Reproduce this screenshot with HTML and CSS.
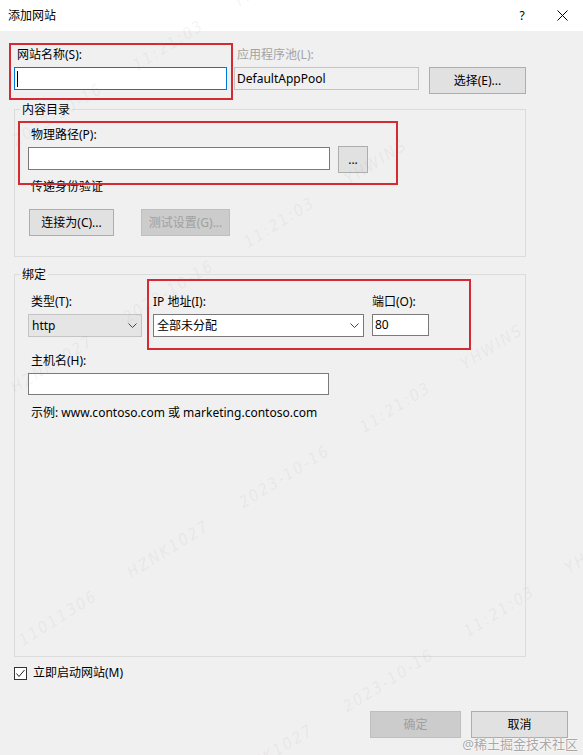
FILE: index.html
```html
<!DOCTYPE html>
<html lang="zh-CN">
<head>
    <meta charset="UTF-8">
    <meta name="viewport" content="width=device-width, initial-scale=1.0">
    <title>添加网站</title>
    <link rel="stylesheet" href="styles.css">
</head>
<body>

    <div class="window">
        <div class="titlebar">
            <span class="title">添加网站</span>
            <span class="help">?</span>
            <span class="close">
                <svg width="11" height="11" viewBox="0 0 11 11"><path d="M0.5 0.5 L10.5 10.5 M10.5 0.5 L0.5 10.5" stroke="#000" stroke-width="1" fill="none"/></svg>
            </span>
        </div>

        <div class="dialog">
            <div class="top-row">
                <div class="field name-field">
                    <div class="label">网站名称(S):</div>
                    <div class="textbox focused"><span class="caret"></span></div>
                </div>
                <div class="field pool-field">
                    <div class="label disabled">应用程序池(L):</div>
                    <div class="textbox readonly">DefaultAppPool</div>
                </div>
                <button class="btn select-btn">选择(E)...</button>
            </div>

            <div class="group dir-group">
                <div class="group-title">内容目录</div>
                <div class="label path-label">物理路径(P):</div>
                <div class="path-row">
                    <div class="textbox path-box"></div>
                    <button class="btn browse-btn">...</button>
                </div>
                <div class="label pass-label">传递身份验证</div>
                <div class="btn-row">
                    <button class="btn connect-btn">连接为(C)...</button>
                    <button class="btn disabled test-btn">测试设置(G)...</button>
                </div>
            </div>

            <div class="group bind-group">
                <div class="group-title">绑定</div>
                <div class="bind-row">
                    <div class="field type-field">
                        <div class="label">类型(T):</div>
                        <div class="combo dropdown">
                            <span>http</span>
                            <svg class="chevron" width="9" height="5" viewBox="0 0 9 5"><path d="M0.5 0.5 L4.5 4.5 L8.5 0.5" stroke="#444" fill="none"/></svg>
                        </div>
                    </div>
                    <div class="field ip-field">
                        <div class="label">IP 地址(I):</div>
                        <div class="combo editable">
                            <span>全部未分配</span>
                            <svg class="chevron" width="9" height="5" viewBox="0 0 9 5"><path d="M0.5 0.5 L4.5 4.5 L8.5 0.5" stroke="#444" fill="none"/></svg>
                        </div>
                    </div>
                    <div class="field port-field">
                        <div class="label">端口(O):</div>
                        <div class="textbox port-box">80</div>
                    </div>
                </div>
                <div class="label host-label">主机名(H):</div>
                <div class="textbox host-box"></div>
                <div class="example">示例: www.contoso.com 或 marketing.contoso.com</div>
            </div>

            <div class="check-row">
                <span class="checkbox">
                    <svg width="11" height="11" viewBox="0 0 11 11"><path d="M1.5 5.5 L4 8.5 L9.5 2" stroke="#222" stroke-width="1" fill="none"/></svg>
                </span>
                <span>立即启动网站(M)</span>
            </div>

            <div class="footer">
                <button class="btn disabled ok-btn">确定</button>
                <button class="btn cancel-btn">取消</button>
            </div>
        </div>

        <!-- red annotation boxes drawn on top of the dialog -->
        <div class="mark mark-name"></div>
        <div class="mark mark-path"></div>
        <div class="mark mark-ip"></div>

        <div class="watermark">
            <span class="wm wm-a">11011306 HZNK1027 2023-10-16 11:21:03 YHWINS</span>
            <span class="wm wm-b">11011306 HZNK1027 2023-10-16 11:21:03 YHWINS</span>
            <span class="wm wm-c">11011306 HZNK1027 2023-10-16 11:21:03 YHWINS</span>
            <span class="wm wm-d">11011306 HZNK1027 2023-10-16 11:21:03 YHWINS</span>
        </div>

        <div class="credit">@稀土掘金技术社区</div>
    </div>

</body>
</html>
```

FILE: styles.css
```css
body {
    margin: 0;
    font-family: "Noto Sans", "Noto Sans CJK SC", sans-serif;
    font-size: 12px;
    color: #000;
    background: #f0f0f0;
}

.window {
    position: relative;
    width: 583px;
    height: 755px;
    overflow: hidden;
    background: #f0f0f0;
}

.titlebar {
    height: 31px;
    background: #fff;
    display: flex;
    align-items: center;
    padding: 0 15px 0 8px;
    line-height: 16px;
}

.title {
    flex: 1;
}

.help {
    width: 10px;
    text-align: center;
    margin-right: 30px;
}

.close svg {
    display: block;
}

.dialog {
    padding: 16px 15px 0 14px;
}

.top-row {
    display: flex;
    align-items: flex-start;
}

.label {
    line-height: 16px;
    margin-bottom: 4px;
    padding-left: 3px;
    white-space: nowrap;
}

.label.disabled {
    color: #a3a3a3;
}

.textbox {
    box-sizing: border-box;
    height: 23px;
    border: 1px solid #7a7a7a;
    background: #fff;
    display: flex;
    align-items: center;
    padding-left: 2px;
    line-height: 16px;
    white-space: nowrap;
}

.textbox.focused {
    border-color: #0078d7;
}

.textbox.readonly {
    background: #f0f0f0;
    border-color: #c4c4c4;
}

.caret {
    width: 1px;
    height: 16px;
    background: #000;
}

.name-field {
    width: 213px;
}

.pool-field {
    width: 185px;
    margin-left: 7px;
}

.btn {
    box-sizing: border-box;
    height: 27px;
    border: 1px solid #adadad;
    background: #e1e1e1;
    font: inherit;
    color: #000;
    padding: 0;
    display: flex;
    align-items: center;
    justify-content: center;
    line-height: 16px;
}

.btn.disabled {
    background: #cccccc;
    border-color: #bfbfbf;
    color: #a0a0a0;
}

.select-btn {
    width: 97px;
    margin: 20px 0 0 10px;
}

.group {
    box-sizing: border-box;
    width: 512px;
    border: 1px solid #dcdcdc;
    padding-left: 13px;
}

.group-title {
    display: table;
    margin: -8px 0 0 -8px;
    padding: 0 2px;
    background: #f0f0f0;
    line-height: 16px;
}

.dir-group {
    margin-top: 15px;
    padding-bottom: 20px;
}

.path-label {
    margin-top: 9px;
}

.path-row {
    display: flex;
    align-items: flex-start;
}

.path-box {
    width: 302px;
}

.browse-btn {
    width: 30px;
    margin: -1px 0 0 8px;
}

.pass-label {
    margin: 6px 0 0;
}

.btn-row {
    display: flex;
    margin-top: 14px;
}

.connect-btn {
    width: 85px;
    margin-left: 1px;
}

.test-btn {
    width: 89px;
    margin-left: 27px;
}

.bind-group {
    margin-top: 17px;
    height: 383px;
}

.bind-row {
    display: flex;
    margin-top: 11px;
}

.type-field {
    width: 114px;
}

.ip-field {
    width: 211px;
    margin-left: 11px;
}

.port-field {
    width: 57px;
    margin-left: 8px;
}

.ip-field .label,
.port-field .label {
    padding-left: 0;
}

.combo {
    box-sizing: border-box;
    height: 23px;
    border: 1px solid #7a7a7a;
    display: flex;
    align-items: center;
    justify-content: space-between;
    padding: 0 4px 0 3px;
    line-height: 16px;
}

.combo.dropdown {
    background: #e5e5e5;
    border-color: #c4c4c4;
}

.combo.editable {
    background: #fff;
}

.chevron {
    display: block;
}

.port-box {
    height: 22px;
}

.host-label {
    margin-top: 16px;
}

.host-box {
    width: 301px;
    height: 22px;
}

.example {
    margin-top: 10px;
    padding-left: 3px;
    line-height: 16px;
}

.check-row {
    display: flex;
    align-items: center;
    margin-top: 8px;
    line-height: 16px;
}

.checkbox {
    box-sizing: border-box;
    width: 13px;
    height: 13px;
    border: 1px solid #333;
    background: #fff;
    margin-right: 6px;
}

.checkbox svg {
    display: block;
}

.footer {
    display: flex;
    justify-content: flex-end;
    gap: 10px;
    margin-top: 30px;
}

.ok-btn {
    width: 91px;
}

.cancel-btn {
    width: 97px;
}

.mark {
    position: absolute;
    box-sizing: border-box;
    border: 2px solid #d42a33;
}

.mark-name {
    left: 9px;
    top: 43px;
    width: 224px;
    height: 57px;
}

.mark-path {
    left: 18px;
    top: 121px;
    width: 380px;
    height: 64px;
}

.mark-ip {
    left: 147px;
    top: 279px;
    width: 324px;
    height: 71px;
}

.watermark {
    position: absolute;
    inset: 0;
    pointer-events: none;
}

.wm {
    position: absolute;
    white-space: nowrap;
    font-family: "DejaVu Sans Condensed", "DejaVu Sans", sans-serif;
    font-size: 16px;
    font-style: italic;
    letter-spacing: 2px;
    word-spacing: 32px;
    color: rgba(150, 150, 150, 0.11);
    transform: rotate(-32deg);
    transform-origin: 0 50%;
}

.wm-a {
    left: 20px;
    top: 632px;
}

.wm-b {
    left: -96px;
    top: 447px;
}

.wm-c {
    left: -207px;
    top: 270px;
}

.wm-d {
    left: 124px;
    top: 836px;
}

.credit {
    position: absolute;
    right: 5px;
    bottom: 2px;
    font-size: 13px;
    line-height: 18px;
    color: #a8a8a8;
    text-shadow: 0 0 2px #fff, 0 0 1px #fff;
}
```
